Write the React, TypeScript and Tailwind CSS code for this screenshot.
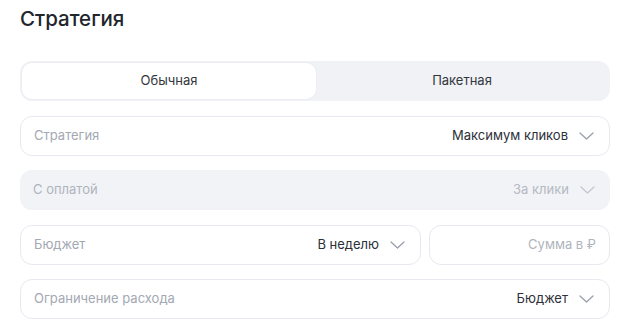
import type { ReactNode } from 'react'

const font = { fontFamily: 'Inter, "Noto Sans", sans-serif' }

function Chevron({ muted }: { muted?: boolean }) {
  return (
    <svg width="15" height="8" viewBox="0 0 15 8" fill="none" className="ml-[11px] shrink-0">
      <polyline
        points="1,1 7.5,7 14,1"
        stroke={muted ? '#c3c7cf' : '#9aa0ab'}
        strokeWidth="1.3"
        strokeLinecap="round"
        strokeLinejoin="round"
      />
    </svg>
  )
}

function Field({
  label,
  value,
  disabled,
  className = '',
}: {
  label: string
  value?: ReactNode
  disabled?: boolean
  className?: string
}) {
  return (
    <div
      className={`flex h-[40px] items-center justify-between rounded-[12px] pl-[13px] pr-[15px] text-[13px] ${
        disabled ? 'bg-[#f1f3f7] text-[#b5b9c2]' : 'border border-[#e6e9ef] bg-white'
      } ${className}`}
    >
      <span className={disabled ? 'text-[#b0b4bd]' : 'text-[#a3a8b2]'}>{label}</span>
      {value !== undefined && (
        <span className="flex items-center">
          <span className={disabled ? 'text-[#b5b9c2]' : 'text-[#2d3038]'}>{value}</span>
          <Chevron muted={disabled} />
        </span>
      )}
    </div>
  )
}

export default function App() {
  return (
    <div className="min-h-screen bg-white px-5 pt-[5px]" style={font}>
      <h1 className="h-7 text-[20.5px] font-medium leading-7 text-[#22252c]">Стратегия</h1>

      <div className="mt-[28px] flex w-[590px] flex-col gap-[14.5px]">
        <div className="flex h-[40px] rounded-[12px] bg-[#f0f2f6] p-[2px] text-[13px] text-[#33363d]">
          <div className="flex w-[294px] items-center justify-center rounded-[10px] bg-white shadow-[0_0_0_1px_#eceef2]">
            Обычная
          </div>
          <div className="flex flex-1 items-center justify-center">Пакетная</div>
        </div>

        <Field label="Стратегия" value="Максимум кликов" />
        <Field label="С оплатой" value="За клики" disabled />

        <div className="flex gap-[8px]">
          <Field label="Бюджет" value="В неделю" className="w-[401px]" />
          <div className="flex h-[40px] flex-1 items-center justify-end rounded-[12px] border border-[#e6e9ef] bg-white pr-[13px] text-[13px] text-[#b0b4bd]">
            Сумма в ₽
          </div>
        </div>

        <Field label="Ограничение расхода" value="Бюджет" />
      </div>
    </div>
  )
}
